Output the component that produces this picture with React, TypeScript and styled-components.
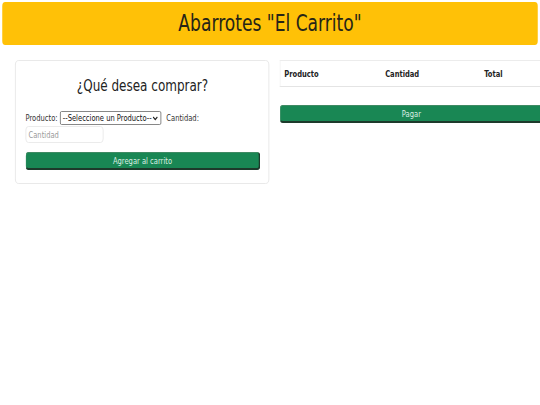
import React from "react";
import styled, { createGlobalStyle } from "styled-components";

const Global = createGlobalStyle`
  html, body { margin: 0; padding: 0; background: #fff; overflow: hidden; }
  body { font-family: "DejaVu Sans", "Noto Sans", sans-serif; color: #212529; }
  * { box-sizing: border-box; }
`;

/* The page is laid out at 720px wide and squeezed horizontally to 540px,
   which reproduces the narrow lettering of the reference. */
const Viewport = styled.div`
  width: 540px;
  height: 405px;
  overflow: hidden;
`;

const Page = styled.div`
  width: 720px;
  height: 405px;
  padding: 2px 0 0 3px;
  transform: scaleX(0.75);
  transform-origin: 0 0;
`;

const Header = styled.header`
  width: 714px;
  height: 43px;
  background: #ffc107;
  border-radius: 4px;
  display: flex;
  align-items: center;
  justify-content: center;
  font-size: 22.8px;
  color: #262417;
  padding-bottom: 1px;
`;

const Main = styled.div`
  display: grid;
  grid-template-columns: 339px 360px;
  column-gap: 15px;
  margin: 15px 0 0 17px;
  align-items: start;
`;

const Card = styled.section`
  border: 1px solid #e6e6e6;
  border-radius: 5px;
  padding: 15px 12px 0 13px;
  height: 124px;
`;

const CardTitle = styled.h2`
  margin: 0 0 16px;
  font-weight: 400;
  font-size: 16px;
  line-height: 19px;
  text-align: center;
  color: #222;
`;

const FormRow = styled.div`
  display: flex;
  align-items: center;
  flex-wrap: wrap;
  font-size: 9px;
  color: #333;
`;

const Label = styled.span`
  margin-right: 3px;
`;

const Select = styled.div`
  width: 135px;
  height: 14px;
  border: 1px solid #767676;
  border-radius: 2px;
  display: flex;
  align-items: center;
  justify-content: space-between;
  padding: 0 3px 0 3px;
  margin-right: 7px;
  font-size: 9px;
  color: #111;
  white-space: nowrap;
`;

const Input = styled.div`
  width: 104px;
  height: 17px;
  border: 1px solid #e8e8e8;
  border-radius: 4px;
  margin-top: 1px;
  padding-left: 3px;
  display: flex;
  align-items: center;
  color: #9a9a9a;
  font-size: 9px;
`;

const Button = styled.button<{ $w: number }>`
  display: block;
  width: ${(p) => p.$w}px;
  height: 18px;
  background: #198754;
  color: #dcefe4;
  border: none;
  border-top: 1px solid #3f8a63;
  border-left: 1px solid #3f8a63;
  border-right: 2.5px solid #1d3a2b;
  border-bottom: 2px solid #1d3a2b;
  border-radius: 4px;
  font-family: inherit;
  font-size: 9px;
  padding: 0;
`;

const AddButton = styled(Button)`
  margin-top: 9px;
`;

const PayButton = styled(Button)`
  margin-top: 18px;
  margin-left: -1px;
`;

const Table = styled.div`
  border-top: 1px solid #ececec;
  border-bottom: 1px solid #e4e4e4;
  border-left: 1px solid #f2f2f2;
  height: 27px;
  margin-left: -1px;
  display: grid;
  grid-template-columns: 134.5px 132px 80px;
  align-items: center;
  padding-left: 5px;
  font-weight: 700;
  font-size: 9px;
  color: #222;
`;

const Arrow = () => (
  <svg width="8" height="5" viewBox="0 0 8 5">
    <path d="M1.2 1l2.8 2.6L6.8 1" stroke="#222" strokeWidth="1.4" fill="none" />
  </svg>
);

export default function App() {
  return (
    <Viewport>
      <Global />
      <Page>
        <Header>Abarrotes "El Carrito"</Header>
        <Main>
          <Card>
            <CardTitle>¿Qué desea comprar?</CardTitle>
            <FormRow>
              <Label>Producto:</Label>
              <Select>
                <span>--Seleccione un Producto--</span>
                <Arrow />
              </Select>
              <Label>Cantidad:</Label>
              <Input>Cantidad</Input>
            </FormRow>
            <AddButton $w={313}>Agregar al carrito</AddButton>
          </Card>
          <div>
            <Table>
              <span>Producto</span>
              <span>Cantidad</span>
              <span>Total</span>
            </Table>
            <PayButton $w={352}>Pagar</PayButton>
          </div>
        </Main>
      </Page>
    </Viewport>
  );
}
